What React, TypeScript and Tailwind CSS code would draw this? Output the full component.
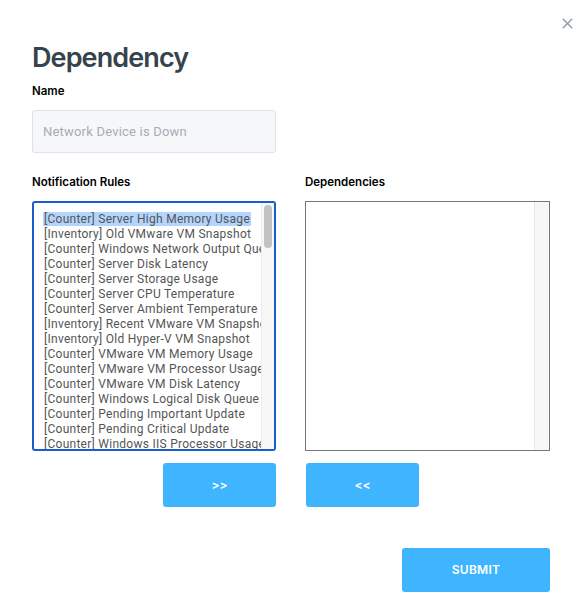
import { X } from 'lucide-react';

const rules = [
  '[Counter] Server High Memory Usage',
  '[Inventory] Old VMware VM Snapshot',
  '[Counter] Windows Network Output Queue',
  '[Counter] Server Disk Latency',
  '[Counter] Server Storage Usage',
  '[Counter] Server CPU Temperature',
  '[Counter] Server Ambient Temperature',
  '[Inventory] Recent VMware VM Snapshot',
  '[Inventory] Old Hyper-V VM Snapshot',
  '[Counter] VMware VM Memory Usage',
  '[Counter] VMware VM Processor Usage',
  '[Counter] VMware VM Disk Latency',
  '[Counter] Windows Logical Disk Queue',
  '[Counter] Pending Important Update',
  '[Counter] Pending Critical Update',
  '[Counter] Windows IIS Processor Usage',
  '[Counter] Windows IIS Memory Usage',
];

export default function App() {
  return (
    <div
      className="relative w-[587px] h-[609px] bg-white pl-8 pr-[37px] pt-[41px]"
      style={{ fontFamily: 'Inter, "Noto Sans", sans-serif' }}
    >
      <button className="absolute right-[11px] top-[15px] text-[#9aa5ad]">
        <X size={17} strokeWidth={2.4} />
      </button>

      <h1 className="text-[27px] leading-[33px] font-semibold tracking-[-0.9px] text-[#36434c]">Dependency</h1>

      <label className="block mt-[9px] text-[11.5px] leading-4 font-semibold text-black">Name</label>
      <input
        className="mt-[11px] block w-[244px] h-[43px] rounded-[3px] border border-[#dde3e8] bg-[#f5f7f9] px-[10px] text-[13px] tracking-[0.2px] text-[#555] placeholder:text-[#a7adb3] outline-none"
        placeholder="Network Device is Down"
        style={{ fontFamily: 'Roboto, sans-serif' }}
      />

      <div className="mt-[21px] grid grid-cols-[244px_245px] gap-x-[29px]">
        <div>
          <div className="text-[11.5px] leading-4 font-semibold text-black">Notification Rules</div>
          <div className="mt-[11px] h-[250px] flex rounded-[3px] border-2 border-[#1b5dcb] overflow-hidden">
            <div
              className="flex-1 overflow-hidden pt-[9px] pl-[9px] text-xs leading-[15px] tracking-[0.27px] text-[#555] whitespace-nowrap"
              style={{ fontFamily: 'Roboto, sans-serif' }}
            >
              {rules.map((r, i) => (
                <div key={r}>
                  <span className={i === 0 ? 'bg-[#b3d4fd] pl-px pr-px' : 'pl-px'}>{r}</span>
                </div>
              ))}
            </div>
            <div className="w-[13px] bg-[#f7f7f7] border-l border-[#ececec] pt-[2px] flex justify-center">
              <div className="w-[8px] h-[43px] rounded-full bg-[#c2c2c2]" />
            </div>
          </div>
          <div className="mt-[12px] flex justify-end">
            <button className="w-[113px] h-[44px] rounded-[3px] bg-[#40b5ff] text-white text-xs font-semibold">
              &gt;&gt;
            </button>
          </div>
        </div>

        <div>
          <div className="text-[11.5px] leading-4 font-semibold text-black">Dependencies</div>
          <div className="mt-[11px] h-[250px] flex border border-[#777]">
            <div className="flex-1" />
            <div className="w-[15px] bg-[#f7f7f7] border-l border-[#e6e6e6]" />
          </div>
          <div className="mt-[12px] pl-px">
            <button className="w-[113px] h-[44px] rounded-[3px] bg-[#40b5ff] text-white text-xs font-semibold">
              &lt;&lt;
            </button>
          </div>
        </div>
      </div>

      <div className="mt-[41px] flex justify-end">
        <button className="w-[148px] h-[44px] rounded-[3px] bg-[#40b5ff] text-white text-xs font-semibold tracking-[0.3px]">
          SUBMIT
        </button>
      </div>
    </div>
  );
}
